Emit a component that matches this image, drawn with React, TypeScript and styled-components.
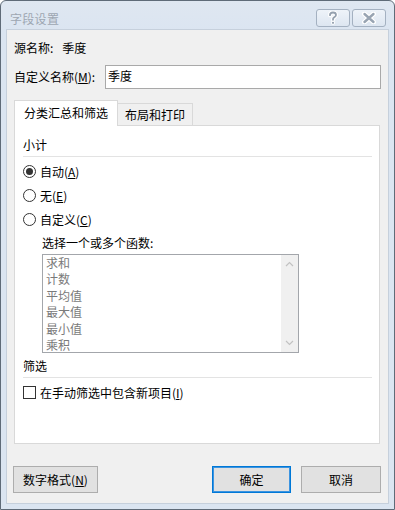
import React from 'react';
import styled, { createGlobalStyle } from 'styled-components';

const GlobalStyle = createGlobalStyle`
  html, body {
    margin: 0;
    padding: 0;
    background: #ffffff;
  }
  body {
    font-family: "Noto Sans CJK SC", "Noto Sans", sans-serif;
    font-size: 12px;
    color: #000000;
  }
`;

const Window = styled.div`
  box-sizing: border-box;
  width: 395px;
  height: 510px;
  display: flex;
  flex-direction: column;
  border: 1px solid #5f6b78;
  border-radius: 6px 6px 0 0;
  background: linear-gradient(#dfe7f1, #dbe5f1 30px, #dbe5f1);
  padding: 0 6px 6px;
`;

const TitleBar = styled.div`
  height: 29px;
  display: flex;
  align-items: flex-start;
  justify-content: space-between;
  flex-shrink: 0;
`;

const Title = styled.div`
  margin: 11px 0 0 3px;
  font-size: 12px;
  line-height: 14px;
  color: #9da6b1;
  letter-spacing: 0.3px;
`;

const CaptionGroup = styled.div`
  display: flex;
  gap: 2px;
  margin: 8px 2px 0 0;
`;

const CaptionButton = styled.div`
  box-sizing: border-box;
  width: 34px;
  height: 18px;
  border: 1px solid #a4b1c1;
  border-radius: 3px;
  background: linear-gradient(#eef3f9, #dde6f1);
  display: flex;
  align-items: center;
  justify-content: center;
`;

const HelpGlyph = () => (
  <svg width="12" height="14" viewBox="0 0 12 14">
    <path
      d="M3 4.2 C3 2.3 4.4 1.5 6 1.5 C7.8 1.5 9 2.5 9 4 C9 5.6 7.6 6 6.6 6.8 C6.1 7.2 6 7.7 6 8.8"
      fill="none"
      stroke="#ffffff"
      strokeWidth="4"
      strokeLinecap="round"
    />
    <circle cx="6" cy="11.8" r="2" fill="#ffffff" />
    <path
      d="M3 4.2 C3 2.3 4.4 1.5 6 1.5 C7.8 1.5 9 2.5 9 4 C9 5.6 7.6 6 6.6 6.8 C6.1 7.2 6 7.7 6 8.8"
      fill="none"
      stroke="#95a1af"
      strokeWidth="1.8"
      strokeLinecap="round"
    />
    <circle cx="6" cy="11.8" r="1.1" fill="#95a1af" />
  </svg>
);

const CloseGlyph = () => (
  <svg width="16" height="12" viewBox="0 0 16 12">
    <path d="M3.5 2 L12.5 10 M12.5 2 L3.5 10" stroke="#ffffff" strokeWidth="5" strokeLinecap="round" />
    <path d="M3.5 2 L12.5 10 M12.5 2 L3.5 10" stroke="#98a4b2" strokeWidth="2.4" strokeLinecap="round" />
  </svg>
);

const Client = styled.div`
  flex: 1;
  display: flex;
  flex-direction: column;
  background: #f0f0f0;
  box-shadow: 0 0 0 1px #c6d0dc;
  padding: 9px 8px 10px 7px;
  min-height: 0;
`;

const SourceRow = styled.div`
  line-height: 17px;
  display: flex;
  gap: 9px;
`;

const NameRow = styled.div`
  margin-top: 9px;
  display: flex;
  align-items: center;
  justify-content: space-between;
  height: 23px;
`;

const TextInput = styled.div`
  box-sizing: border-box;
  width: 276px;
  height: 24px;
  border: 1px solid #a9a9a9;
  background: #ffffff;
  padding: 0 2px;
  line-height: 20px;
  margin-right: -1px;
`;

const TabBar = styled.div`
  margin-top: 12px;
  display: flex;
  align-items: flex-end;
  height: 25px;
  flex-shrink: 0;
`;

const Tab = styled.div<{ $selected?: boolean }>`
  box-sizing: border-box;
  position: relative;
  z-index: ${p => (p.$selected ? 2 : 1)};
  height: ${p => (p.$selected ? '26px' : '23px')};
  margin-bottom: -1px;
  padding: ${p => (p.$selected ? '0 9px' : '0 7px')};
  margin-left: ${p => (p.$selected ? '0' : '-1px')};
  border: 1px solid #d9d9d9;
  border-bottom: ${p => (p.$selected ? 'none' : '1px solid #d9d9d9')};
  background: ${p => (p.$selected ? '#ffffff' : '#f0f0f0')};
  line-height: ${p => (p.$selected ? '24px' : '21px')};
  white-space: nowrap;
`;

const Panel = styled.div`
  flex: 1;
  display: flex;
  flex-direction: column;
  border: 1px solid #d9d9d9;
  background: #ffffff;
  padding: 10px 7px 0 8px;
  min-height: 0;
`;

const SectionTitle = styled.div<{ $gap?: number }>`
  margin-top: ${p => p.$gap ?? 0}px;
  line-height: 17px;
  padding-bottom: 3px;
  border-bottom: 1px solid #e3e3e3;
`;

const RadioGroup = styled.div`
  margin-top: 2px;
  display: flex;
  flex-direction: column;
`;

const OptionRow = styled.label<{ $height?: number }>`
  display: flex;
  align-items: center;
  gap: 4px;
  height: ${p => p.$height ?? 24}px;
  line-height: 17px;
`;

const RadioCircle = styled.span<{ $checked?: boolean }>`
  box-sizing: border-box;
  width: 13px;
  height: 13px;
  border-radius: 50%;
  border: 1px solid #333333;
  background: #ffffff;
  display: flex;
  align-items: center;
  justify-content: center;
  flex-shrink: 0;

  &::after {
    content: '';
    display: ${p => (p.$checked ? 'block' : 'none')};
    width: 7px;
    height: 7px;
    border-radius: 50%;
    background: #333333;
  }
`;

const CheckBox = styled.span`
  box-sizing: border-box;
  width: 13px;
  height: 13px;
  border: 1px solid #333333;
  background: #ffffff;
  flex-shrink: 0;
`;

const FunctionBlock = styled.div`
  margin: 2px 0 0 19px;
`;

const FunctionLabel = styled.div`
  line-height: 17px;
  padding-top: 1px;
`;

const ListBox = styled.div`
  box-sizing: border-box;
  margin-top: 3px;
  width: 257px;
  height: 99px;
  border: 1px solid #a3a6ab;
  background: #ffffff;
  display: flex;
`;

const ListItems = styled.div`
  flex: 1;
  padding: 0 0 0 3px;
  color: #7a7a7a;
  line-height: 16.4px;
  overflow: hidden;
`;

const ScrollTrack = styled.div`
  width: 17px;
  background: #f0f0f0;
  display: flex;
  flex-direction: column;
  justify-content: space-between;
  align-items: center;
  padding: 6px 0 6px;
`;

const Chevron = ({ up }: { up?: boolean }) => (
  <svg width="9" height="6" viewBox="0 0 9 6">
    <path
      d={up ? 'M1 5 L4.5 1.5 L8 5' : 'M1 1 L4.5 4.5 L8 1'}
      fill="none"
      stroke="#c2c2c2"
      strokeWidth="1.2"
    />
  </svg>
);

const CheckRow = styled(OptionRow)`
  margin-top: 6px;
`;

const ButtonRow = styled.div`
  margin: 22px -1px 0;
  display: flex;
  align-items: center;
  gap: 10px;
  flex-shrink: 0;
`;

const Button = styled.div<{ $width: number; $default?: boolean }>`
  box-sizing: border-box;
  width: ${p => p.$width}px;
  height: 27px;
  border: 1px solid ${p => (p.$default ? '#0078d7' : '#adadad')};
  box-shadow: ${p => (p.$default ? 'inset 0 0 0 1px #3c94e0' : 'none')};
  background: #e1e1e1;
  display: flex;
  align-items: center;
  justify-content: center;
  line-height: 17px;
`;

const Spacer = styled.div`
  flex: 1;
`;

const functions = ['求和', '计数', '平均值', '最大值', '最小值', '乘积'];

export default function App() {
  return (
    <>
      <GlobalStyle />
      <Window>
        <TitleBar>
          <Title>字段设置</Title>
          <CaptionGroup>
            <CaptionButton>
              <HelpGlyph />
            </CaptionButton>
            <CaptionButton>
              <CloseGlyph />
            </CaptionButton>
          </CaptionGroup>
        </TitleBar>
        <Client>
          <SourceRow>
            <span>源名称:</span>
            <span>季度</span>
          </SourceRow>
          <NameRow>
            <span>
              自定义名称(<u>M</u>):
            </span>
            <TextInput>季度</TextInput>
          </NameRow>
          <TabBar>
            <Tab $selected>分类汇总和筛选</Tab>
            <Tab>布局和打印</Tab>
          </TabBar>
          <Panel>
            <SectionTitle>小计</SectionTitle>
            <RadioGroup>
              <OptionRow>
                <RadioCircle $checked />
                <span>
                  自动(<u>A</u>)
                </span>
              </OptionRow>
              <OptionRow>
                <RadioCircle />
                <span>
                  无(<u>E</u>)
                </span>
              </OptionRow>
              <OptionRow>
                <RadioCircle />
                <span>
                  自定义(<u>C</u>)
                </span>
              </OptionRow>
            </RadioGroup>
            <FunctionBlock>
              <FunctionLabel>选择一个或多个函数:</FunctionLabel>
              <ListBox>
                <ListItems>
                  {functions.map(f => (
                    <div key={f}>{f}</div>
                  ))}
                </ListItems>
                <ScrollTrack>
                  <Chevron up />
                  <Chevron />
                </ScrollTrack>
              </ListBox>
            </FunctionBlock>
            <SectionTitle $gap={4}>筛选</SectionTitle>
            <CheckRow $height={17}>
              <CheckBox />
              <span>
                在手动筛选中包含新项目(<u>I</u>)
              </span>
            </CheckRow>
          </Panel>
          <ButtonRow>
            <Button $width={85}>
              数字格式(<u>N</u>)
            </Button>
            <Spacer />
            <Button $width={79} $default>
              确定
            </Button>
            <Button $width={80}>取消</Button>
          </ButtonRow>
        </Client>
      </Window>
    </>
  );
}
